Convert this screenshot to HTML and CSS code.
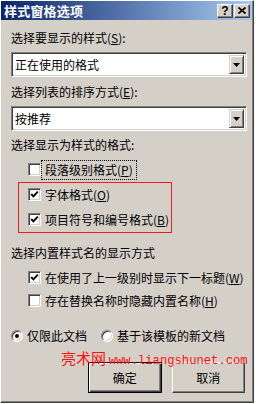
FILE: index.html
```html
<!DOCTYPE html>
<html lang="zh">
<head>
<meta charset="utf-8">
<link rel="stylesheet" href="styles.css">
</head>
<body>
<div class="window">
  <div class="titlebar">
    <span class="title">样式窗格选项</span>
    <div class="tb-buttons">
      <span class="tb-btn help">?</span>
      <span class="tb-btn close"><svg width="8" height="7" viewBox="0 0 8 7"><path d="M0.5 0.5 L7.5 6.5 M7.5 0.5 L0.5 6.5" stroke="#000" stroke-width="1.7" fill="none"/></svg></span>
    </div>
  </div>
  <div class="content">
    <div class="label l1">选择要显示的样式(<u>S</u>):</div>
    <div class="combo">
      <span class="combo-text">正在使用的格式</span>
      <span class="combo-btn"><svg width="7" height="4" viewBox="0 0 7 4"><polygon points="0,0 7,0 3.5,4" fill="#000"/></svg></span>
    </div>
    <div class="label l2">选择列表的排序方式(<u>E</u>):</div>
    <div class="combo">
      <span class="combo-text">按推荐</span>
      <span class="combo-btn"><svg width="7" height="4" viewBox="0 0 7 4"><polygon points="0,0 7,0 3.5,4" fill="#000"/></svg></span>
    </div>
    <div class="label l3">选择显示为样式的格式:</div>
    <div class="group g1">
      <div class="check-row">
        <span class="checkbox"></span>
        <span class="check-label focus">段落级别格式(<u>P</u>)</span>
      </div>
      <div class="check-row">
        <span class="checkbox checked"><svg width="9" height="9" viewBox="0 0 9 9"><path d="M1.2 4 L3.4 6.4 L7.8 1.6" stroke="#000" stroke-width="1.9" fill="none"/></svg></span>
        <span class="check-label">字体格式(<u>O</u>)</span>
      </div>
      <div class="check-row">
        <span class="checkbox checked"><svg width="9" height="9" viewBox="0 0 9 9"><path d="M1.2 4 L3.4 6.4 L7.8 1.6" stroke="#000" stroke-width="1.9" fill="none"/></svg></span>
        <span class="check-label">项目符号和编号格式(<u>B</u>)</span>
      </div>
      <div class="highlight"></div>
    </div>
    <div class="label l4">选择内置样式名的显示方式</div>
    <div class="group g2">
      <div class="check-row small">
        <span class="checkbox checked"><svg width="9" height="9" viewBox="0 0 9 9"><path d="M1.2 4 L3.4 6.4 L7.8 1.6" stroke="#000" stroke-width="1.9" fill="none"/></svg></span>
        <span class="check-label">在使用了上一级别时显示下一标题(<u>W</u>)</span>
      </div>
      <div class="check-row small">
        <span class="checkbox"></span>
        <span class="check-label">存在替换名称时隐藏内置名称(<u>H</u>)</span>
      </div>
    </div>
    <div class="radio-row">
      <span class="radio-item"><span class="radio selected"></span><span class="radio-label">仅限此文档</span></span>
      <span class="radio-item"><span class="radio"></span><span class="radio-label">基于该模板的新文档</span></span>
    </div>
    <div class="button-row">
      <span class="btn default">确定</span>
      <span class="btn">取消</span>
      <div class="watermark"><span class="wm-cn">亮术网</span> <span class="wm-url">www.liangshunet.com</span></div>
    </div>
  </div>
</div>
</body>
</html>
```

FILE: styles.css
```css
html, body {
  margin: 0;
  padding: 0;
  background: #ffffff;
}
body {
  font-family: "Noto Sans CJK SC", "Liberation Sans", sans-serif;
  font-size: 12px;
  color: #000;
}
.window {
  box-sizing: border-box;
  width: 254px;
  height: 403px;
  background: #d4d0c8;
  border-top: 1px solid #ffffff;
  border-left: 1px solid #ffffff;
  border-right: 1px solid #404040;
  border-bottom: 1px solid #404040;
  box-shadow: inset -1px -1px 0 #808080;
  overflow: hidden;
}
.titlebar {
  height: 19px;
  margin-right: 1px;
  background: linear-gradient(to right, #0a246a, #a6caf0);
  display: flex;
  align-items: center;
  justify-content: space-between;
  padding-left: 3px;
}
.title {
  color: #fff;
  font-weight: bold;
  font-size: 13px;
  line-height: 19px;
  letter-spacing: 0.2px;
}
.tb-buttons {
  display: flex;
  gap: 1px;
  margin-right: 2px;
}
.tb-btn {
  box-sizing: border-box;
  width: 16px;
  height: 14px;
  background: #d4d0c8;
  border-top: 1px solid #fff;
  border-left: 1px solid #fff;
  border-right: 1px solid #404040;
  border-bottom: 1px solid #404040;
  box-shadow: inset -1px -1px 0 #808080;
  display: flex;
  align-items: center;
  justify-content: center;
}
.help {
  font-family: "Liberation Sans", sans-serif;
  font-weight: bold;
  font-size: 12px;
  line-height: 12px;
}
.content {
  padding: 0 8px 0 10px;
}
.label {
  height: 14px;
  line-height: 14px;
  white-space: nowrap;
}
.l1 { margin-top: 11px; }
.l2 { margin-top: 8px; }
.l3 { margin-top: 7px; }
.l4 { margin-top: 14px; }
.combo {
  box-sizing: border-box;
  margin-top: 7px;
  width: 236px;
  height: 25px;
  background: #fff;
  border-top: 1px solid #808080;
  border-left: 1px solid #808080;
  border-right: 1px solid #ffffff;
  border-bottom: 1px solid #ffffff;
  box-shadow: inset 1px 1px 0 #404040, inset -1px -1px 0 #d4d0c8;
  display: flex;
  align-items: center;
  padding: 2px;
}
.combo-text {
  flex: 1;
  padding-left: 1px;
  line-height: 14px;
}
.combo-btn {
  box-sizing: border-box;
  width: 15px;
  height: 19px;
  background: #d4d0c8;
  border-top: 1px solid #d4d0c8;
  border-left: 1px solid #d4d0c8;
  border-right: 1px solid #404040;
  border-bottom: 1px solid #404040;
  box-shadow: inset 1px 1px 0 #fff, inset -1px -1px 0 #808080;
  display: flex;
  align-items: center;
  justify-content: center;
}
.group {
  position: relative;
}
.g1 { margin-top: 5px; }
.g2 { margin-top: 6px; }
.check-row {
  height: 25px;
  display: flex;
  align-items: center;
  padding-left: 17px;
}
.check-row.small { height: 23px; }
.checkbox {
  box-sizing: border-box;
  width: 13px;
  height: 13px;
  background: #fff;
  border-top: 1px solid #808080;
  border-left: 1px solid #808080;
  border-right: 1px solid #fff;
  border-bottom: 1px solid #fff;
  box-shadow: inset 1px 1px 0 #404040, inset -1px -1px 0 #d4d0c8;
  display: flex;
  align-items: center;
  justify-content: center;
  flex: none;
}
.check-label {
  margin-left: 4px;
  line-height: 14px;
  white-space: nowrap;
}
.check-label.focus {
  outline: 1px dotted #000;
  outline-offset: 2px;
  padding: 0 1px;
  margin-left: 3px;
}
.highlight {
  position: absolute;
  left: 7px;
  top: 25px;
  width: 152px;
  height: 49px;
  border: 1px solid #ff1a1a;
}
.radio-row {
  margin-top: 17px;
  height: 14px;
  display: flex;
  align-items: center;
}
.radio-item {
  display: flex;
  align-items: center;
}
.radio-item + .radio-item {
  margin-left: 14px;
}
.radio {
  box-sizing: border-box;
  width: 12px;
  height: 12px;
  border-radius: 50%;
  background: #fff;
  border: 1px solid;
  border-color: #808080 #fff #fff #808080;
  box-shadow: inset 1px 1px 0 #404040, inset -1px -1px 0 #d4d0c8;
  position: relative;
}
.radio.selected::after {
  content: "";
  position: absolute;
  left: 3px;
  top: 3px;
  width: 4px;
  height: 4px;
  border-radius: 50%;
  background: #000;
}
.radio-label {
  margin-left: 4px;
  line-height: 14px;
}
.button-row {
  position: relative;
  margin-top: 19px;
  margin-left: 77px;
  display: flex;
  gap: 10px;
}
.btn {
  box-sizing: border-box;
  width: 75px;
  height: 31px;
  background: #d4d0c8;
  border-top: 1px solid #fff;
  border-left: 1px solid #fff;
  border-right: 1px solid #404040;
  border-bottom: 1px solid #404040;
  box-shadow: inset -1px -1px 0 #808080;
  display: flex;
  align-items: center;
  justify-content: center;
}
.btn.default {
  border: 1px solid #000;
  box-shadow: inset 1px 1px 0 #fff, inset -1px -1px 0 #404040, inset -2px -2px 0 #808080;
}
.watermark {
  position: absolute;
  left: -27px;
  top: -12px;
  color: #ff1010;
  white-space: nowrap;
  line-height: 16px;
}
.wm-cn {
  font-size: 15px;
}
.wm-url {
  font-family: "Liberation Mono", monospace;
  font-size: 12.2px;
}
```
